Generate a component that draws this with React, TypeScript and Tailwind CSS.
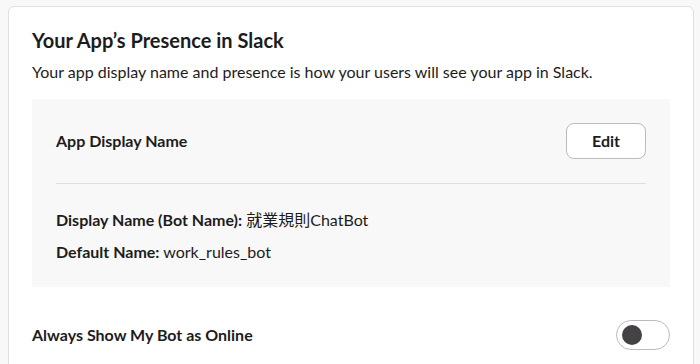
import React from "react";

export default function App() {
  return (
    <div
      className="w-[700px] h-[364px] overflow-hidden bg-[#f8f8f8] pl-[8px] pt-[6px]"
      style={{ fontFamily: "Lato, 'Noto Sans CJK JP', sans-serif" }}
    >
      <div className="w-[686px] h-[400px] bg-white border border-[#e0e0e0] rounded-[6px] px-[23px] pt-[19px] text-[#1d1c1d]">
        <h2 className="text-[20px] leading-[28px] font-bold">Your App’s Presence in Slack</h2>
        <p className="text-[16px] leading-[24px] mt-[6px]">
          Your app display name and presence is how your users will see your app in Slack.
        </p>
        <div className="mt-[15px] w-[638px] bg-[#f8f8f8] px-[24px] pt-[24px] pb-[23px]">
          <div className="flex items-center justify-between h-[36px]">
            <span className="text-[16px] font-bold">App Display Name</span>
            <button className="w-[80px] h-[36px] rounded-[8px] border border-[#bbbbbb] bg-white text-[16px] font-bold">
              Edit
            </button>
          </div>
          <div className="mt-[24px] h-px bg-[#dddddd]" />
          <div className="mt-[24px] text-[16px] leading-[24px]">
            <b className="font-bold">Display Name (Bot Name):</b> 就業規則ChatBot
          </div>
          <div className="mt-[8px] text-[16px] leading-[24px]">
            <b className="font-bold">Default Name:</b> work_rules_bot
          </div>
        </div>
        <div className="mt-[33px] flex items-center justify-between w-[638px]">
          <span className="text-[16px] font-bold">Always Show My Bot as Online</span>
          <div className="w-[54px] h-[30px] rounded-full border border-[#bbbbbb] bg-white flex items-center pl-[5px]">
            <div className="w-[20px] h-[20px] rounded-full bg-[#454245]" />
          </div>
        </div>
      </div>
    </div>
  );
}
